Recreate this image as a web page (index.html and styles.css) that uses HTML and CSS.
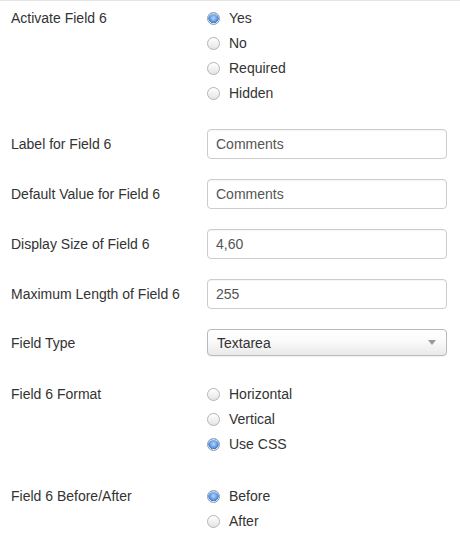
FILE: index.html
```html
<!DOCTYPE html>
<html>
<head>
<meta charset="utf-8">
<link rel="stylesheet" href="styles.css">
</head>
<body>
<div class="form">
  <div class="row row-radio">
    <div class="label">Activate Field 6</div>
    <div class="controls">
      <label class="radio"><input type="radio" name="a" checked><span>Yes</span></label>
      <label class="radio"><input type="radio" name="a"><span>No</span></label>
      <label class="radio"><input type="radio" name="a"><span>Required</span></label>
      <label class="radio"><input type="radio" name="a"><span>Hidden</span></label>
    </div>
  </div>
  <div class="row row-input first-input">
    <div class="label">Label for Field 6</div>
    <div class="controls"><input class="text" type="text" value="Comments"></div>
  </div>
  <div class="row row-input">
    <div class="label">Default Value for Field 6</div>
    <div class="controls"><input class="text" type="text" value="Comments"></div>
  </div>
  <div class="row row-input">
    <div class="label">Display Size of Field 6</div>
    <div class="controls"><input class="text" type="text" value="4,60"></div>
  </div>
  <div class="row row-input">
    <div class="label">Maximum Length of Field 6</div>
    <div class="controls"><input class="text" type="text" value="255"></div>
  </div>
  <div class="row row-select">
    <div class="label">Field Type</div>
    <div class="controls">
      <div class="select"><span>Textarea</span><span class="arrow"></span></div>
    </div>
  </div>
  <div class="row row-radio format">
    <div class="label">Field 6 Format</div>
    <div class="controls">
      <label class="radio"><input type="radio" name="f"><span>Horizontal</span></label>
      <label class="radio"><input type="radio" name="f"><span>Vertical</span></label>
      <label class="radio"><input type="radio" name="f" checked><span>Use CSS</span></label>
    </div>
  </div>
  <div class="row row-radio beforeafter">
    <div class="label">Field 6 Before/After</div>
    <div class="controls">
      <label class="radio"><input type="radio" name="b" checked><span>Before</span></label>
      <label class="radio"><input type="radio" name="b"><span>After</span></label>
    </div>
  </div>
</div>
</body>
</html>
```

FILE: styles.css
```css
html, body {
  margin: 0;
  padding: 0;
  background: #fff;
}
body {
  font-family: "Liberation Sans", Arial, sans-serif;
  font-size: 14px;
  color: #333;
}
.form {
  border-top: 1px solid #e5e5e5;
  padding-top: 5px;
}
.row {
  display: flex;
  align-items: flex-start;
}
.label {
  width: 207px;
  padding-left: 11px;
  box-sizing: border-box;
  flex: none;
}
.controls {
  width: 240px;
  flex: none;
}
.row-radio .label { line-height: 25px; }
.row-input .label { line-height: 30px; }
.row-select .label { line-height: 28px; }
.row-input { margin-top: 20px; }
.first-input { margin-top: 23px; }
.row-select { margin-top: 20px; }
.format { margin-top: 25px; }
.beforeafter { margin-top: 27px; }

.radio {
  display: flex;
  align-items: center;
  height: 25px;
}
.radio input {
  appearance: none;
  -webkit-appearance: none;
  margin: 0 9px 0 0;
  width: 13px;
  height: 13px;
  border-radius: 50%;
  border: 1px solid #b4b4b4;
  box-sizing: border-box;
  background: linear-gradient(#ffffff, #e4e4e4);
  box-shadow: inset 0 1px 1px rgba(255,255,255,0.9);
  flex: none;
}
.radio input:checked {
  border-color: #8c9cb3;
  background: radial-gradient(circle at 50% 45%, #b7d6f7 0, #73a8ea 35%, #3b7bd6 62%, #e8e8e8 66%, #d8d8d8 100%);
}
.radio span { line-height: 25px; }

.text {
  display: block;
  width: 240px;
  height: 30px;
  box-sizing: border-box;
  border: 1px solid #cccccc;
  border-radius: 4px;
  padding: 0 8px;
  font-family: "Liberation Sans", Arial, sans-serif;
  font-size: 14px;
  color: #555;
  background: #fff;
  box-shadow: inset 0 1px 1px rgba(0,0,0,0.04);
  outline: none;
}
.select {
  width: 240px;
  height: 27px;
  box-sizing: border-box;
  border: 1px solid #b9b9b9;
  border-radius: 4px;
  padding: 0 9px;
  display: flex;
  align-items: center;
  justify-content: space-between;
  background: linear-gradient(#ffffff 0%, #fafafa 45%, #e9e9e9 100%);
  box-shadow: 0 1px 1px rgba(0,0,0,0.06);
  color: #333;
}
.arrow {
  width: 0;
  height: 0;
  border-left: 4px solid transparent;
  border-right: 4px solid transparent;
  border-top: 5px solid #9a9a9a;
  margin-right: 1px;
}
```
